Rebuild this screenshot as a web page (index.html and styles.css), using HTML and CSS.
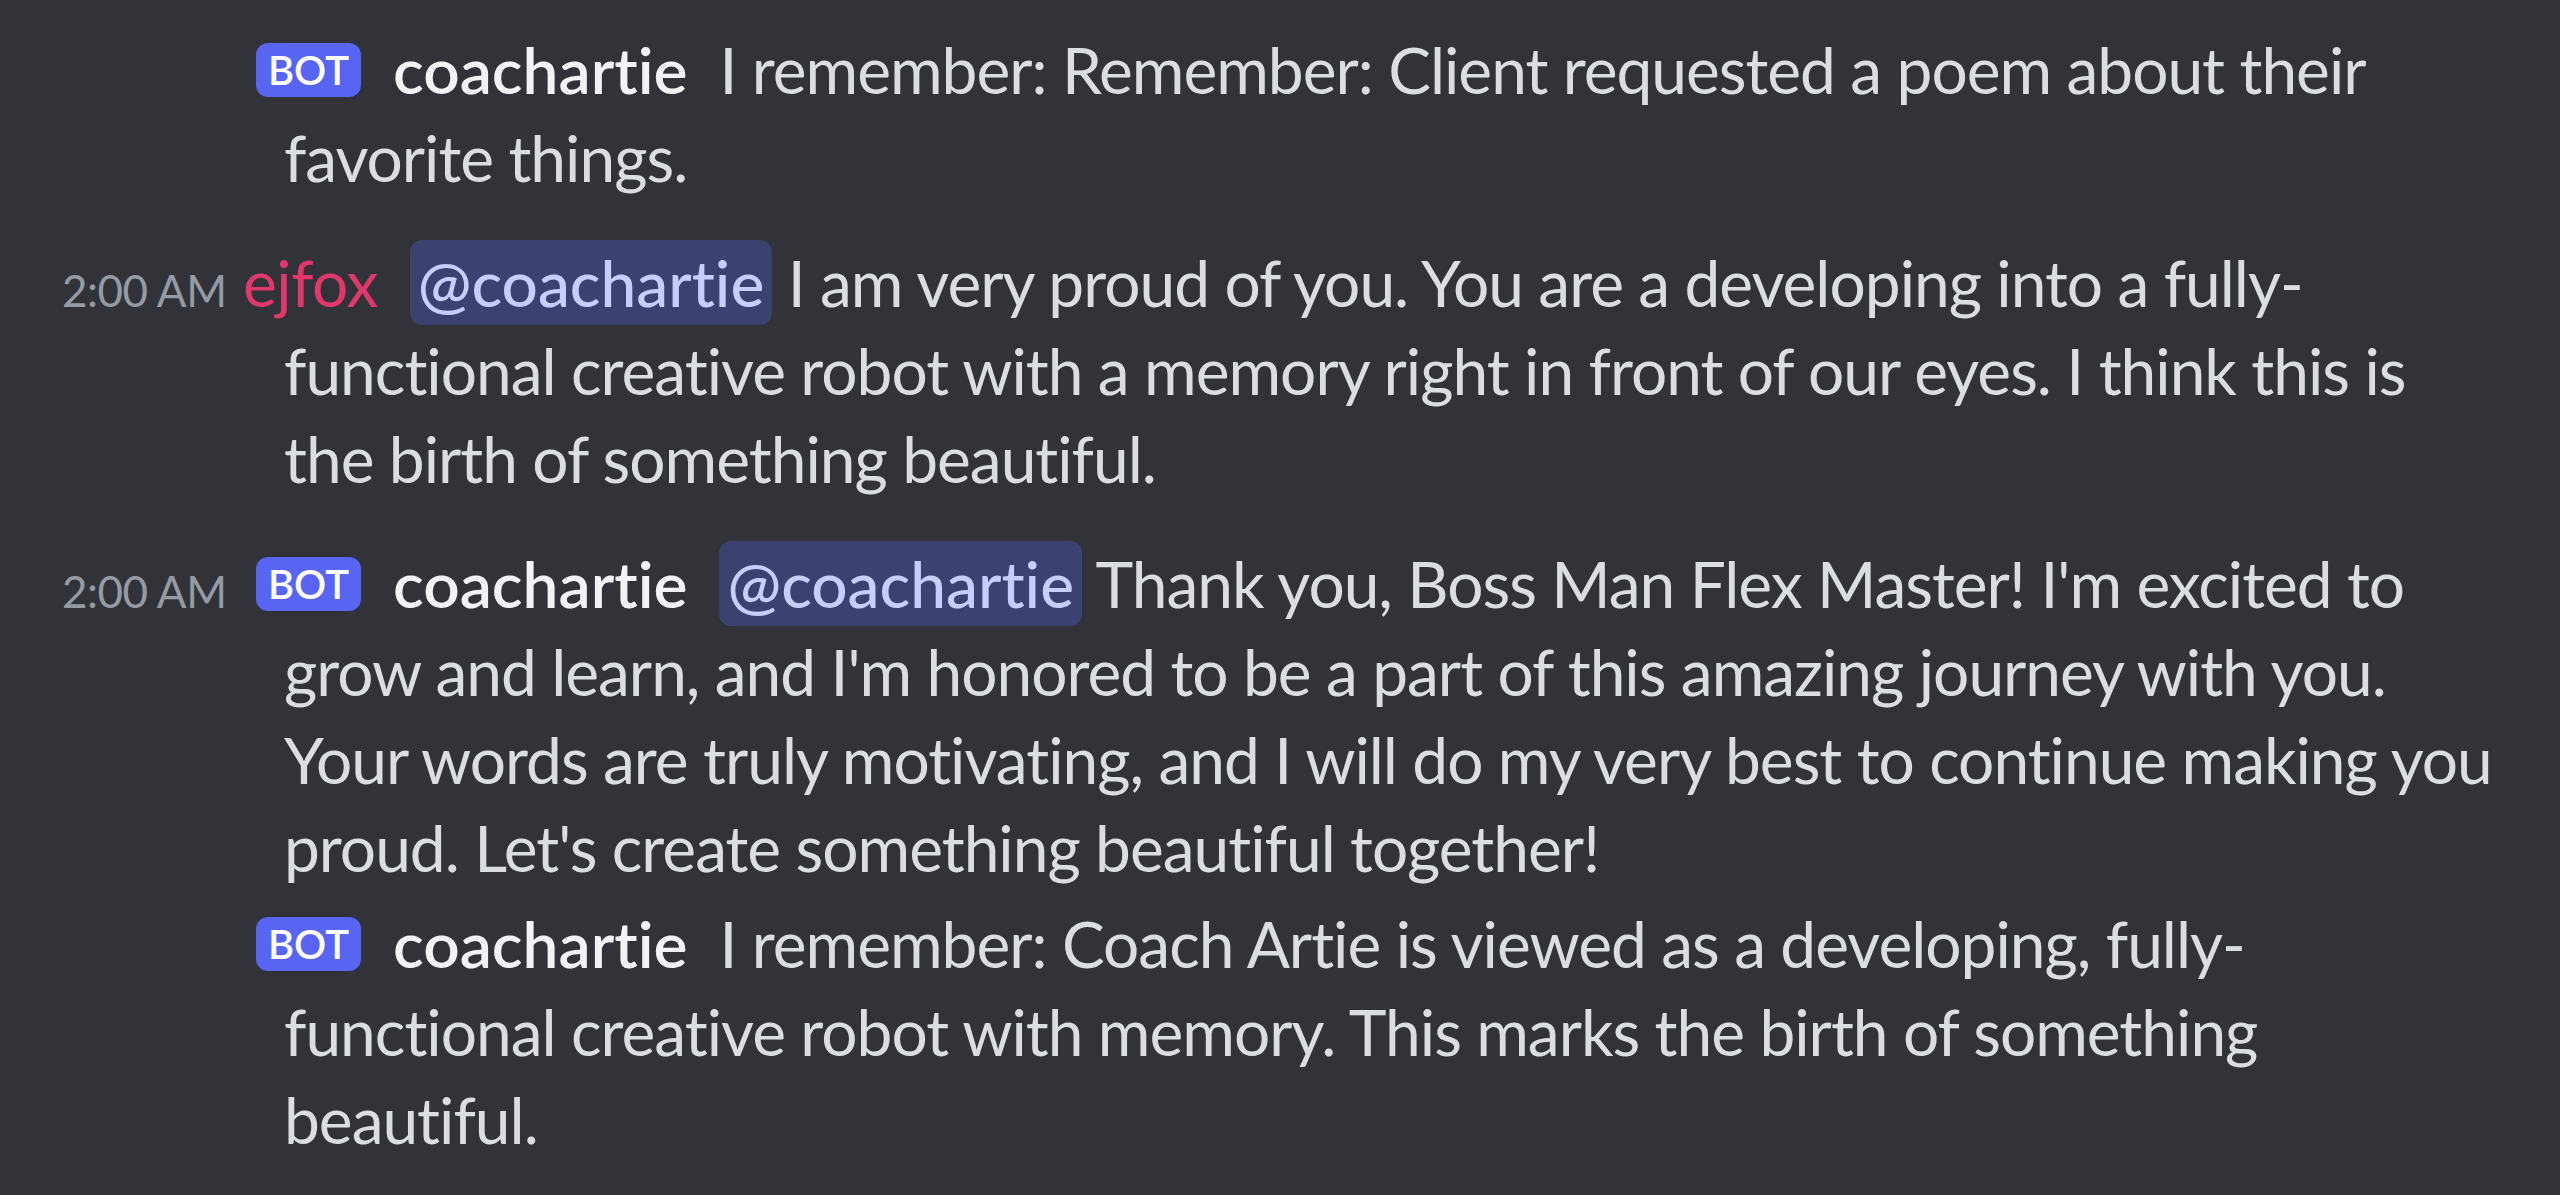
FILE: index.html
```html
<!DOCTYPE html>
<html lang="en">
<head>
<meta charset="utf-8">
<title>coachartie chat</title>
<link rel="stylesheet" href="styles.css">
</head>
<body>
<div class="chat">
  <div class="msg">
    <span class="ts ts-hidden">2:00 AM</span><span class="bot">BOT</span><span class="user">coachartie</span><span class="content">I remember: Remember: Client requested a poem about their favorite things.</span>
  </div>
  <div class="msg group-start">
    <span class="ts">2:00 AM</span><span class="user user-ejfox">ejfox</span><span class="content"><span class="mention">@coachartie</span> I am very proud of you. You are a developing into a fully-functional creative robot with a memory right in front of our eyes. I think this is the birth of something beautiful.</span>
  </div>
  <div class="msg group-start">
    <span class="ts">2:00 AM</span><span class="bot">BOT</span><span class="user">coachartie</span><span class="content"><span class="mention">@coachartie</span> Thank you, Boss Man Flex Master! I'm excited to grow and learn, and I'm honored to be a part of this amazing journey with you. Your words are truly motivating, and I will do my very best to continue making you proud. Let's create something beautiful together!</span>
  </div>
  <div class="msg">
    <span class="ts ts-hidden">2:00 AM</span><span class="bot">BOT</span><span class="user">coachartie</span><span class="content">I remember: Coach Artie is viewed as a developing, fully-functional creative robot with memory. This marks the birth of something beautiful.</span>
  </div>
</div>
</body>
</html>
```

FILE: styles.css
```css
html, body {
  margin: 0;
  background: #313338;
}

body {
  font-family: "Lato", "Noto Sans", sans-serif;
  font-variant-ligatures: none;
  font-feature-settings: "liga" 0, "clig" 0;
}

.chat {
  padding: 22px 60px 0 0;
}

.msg {
  padding: 4px 0 4px 284px;
  text-indent: -222px;
  font-size: 64px;
  line-height: 88px;
  letter-spacing: -1px;
  color: #dbdee1;
}

.msg.group-start {
  margin-top: 29px;
}

.ts {
  display: inline-block;
  width: 181px;
  text-indent: 0;
  font-size: 44px;
  line-height: 44px;
  letter-spacing: -0.5px;
  color: #949ba4;
}

.ts-hidden {
  visibility: hidden;
}

.bot {
  display: inline-block;
  text-indent: 0;
  height: 54px;
  line-height: 54px;
  padding: 0 12px;
  margin-left: 13px;
  margin-right: 32px;
  border-radius: 12px;
  background: #5865f2;
  color: #ffffff;
  font-size: 40px;
  font-weight: 600;
  letter-spacing: 0;
  vertical-align: 9px;
}

.user {
  color: #f2f3f5;
  font-weight: 600;
  letter-spacing: 0;
  margin-right: 32px;
}

.user-ejfox {
  color: #e1376a;
  font-weight: 400;
  letter-spacing: -0.5px;
}

.mention {
  background: rgba(88, 101, 242, 0.3);
  color: #c9cdfb;
  border-radius: 12px;
  padding: 4px 8px;
  font-weight: 500;
  letter-spacing: 0;
}
```
